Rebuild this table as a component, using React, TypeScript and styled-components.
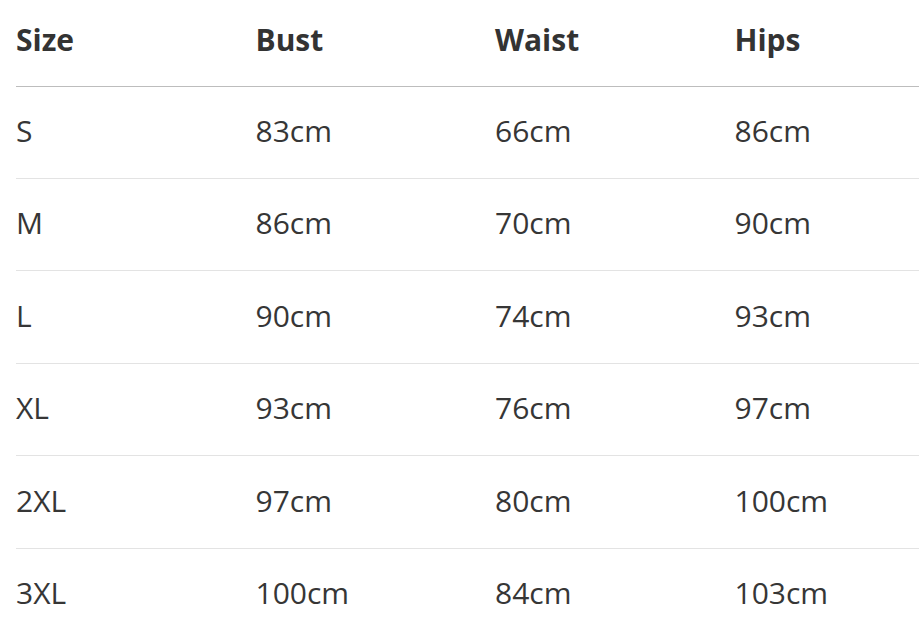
import React from "react";
import styled, { createGlobalStyle } from "styled-components";

const Global = createGlobalStyle`
  html, body {
    margin: 0;
    padding: 0;
    background: #ffffff;
    overflow: hidden;
  }
  body {
    font-family: "Open Sans", "Noto Sans", "Liberation Sans", sans-serif;
    color: #333333;
  }
`;

const Page = styled.div`
  padding-left: 16px;
`;

const Table = styled.table`
  width: 100%;
  table-layout: fixed;
  border-collapse: collapse;
  font-size: 30px;
  line-height: 45px;
`;

const Col = styled.col<{ $wide?: boolean }>`
  width: ${(p) => (p.$wide ? "auto" : "239.5px")};
`;

const HeadCell = styled.th`
  text-align: left;
  font-weight: 700;
  color: #333333;
  padding: 16.6px 0 24px 0;
  border-bottom: 1px solid #bdbdbd;
  white-space: nowrap;
`;

const Cell = styled.td`
  text-align: left;
  font-weight: 400;
  color: #363636;
  padding: 21.4px 0 25px 0;
  border-bottom: 1px solid #e3e3e3;
  white-space: nowrap;
`;

const headers = ["Size", "Bust", "Waist", "Hips"];
const rows = [
  ["S", "83cm", "66cm", "86cm"],
  ["M", "86cm", "70cm", "90cm"],
  ["L", "90cm", "74cm", "93cm"],
  ["XL", "93cm", "76cm", "97cm"],
  ["2XL", "97cm", "80cm", "100cm"],
  ["3XL", "100cm", "84cm", "103cm"],
];

export default function App() {
  return (
    <Page>
      <Global />
      <Table>
        <colgroup>
          <Col />
          <Col />
          <Col />
          <Col $wide />
        </colgroup>
        <thead>
          <tr>
            {headers.map((h) => (
              <HeadCell key={h}>{h}</HeadCell>
            ))}
          </tr>
        </thead>
        <tbody>
          {rows.map((r) => (
            <tr key={r[0]}>
              {r.map((c, i) => (
                <Cell key={i}>{c}</Cell>
              ))}
            </tr>
          ))}
        </tbody>
      </Table>
    </Page>
  );
}
